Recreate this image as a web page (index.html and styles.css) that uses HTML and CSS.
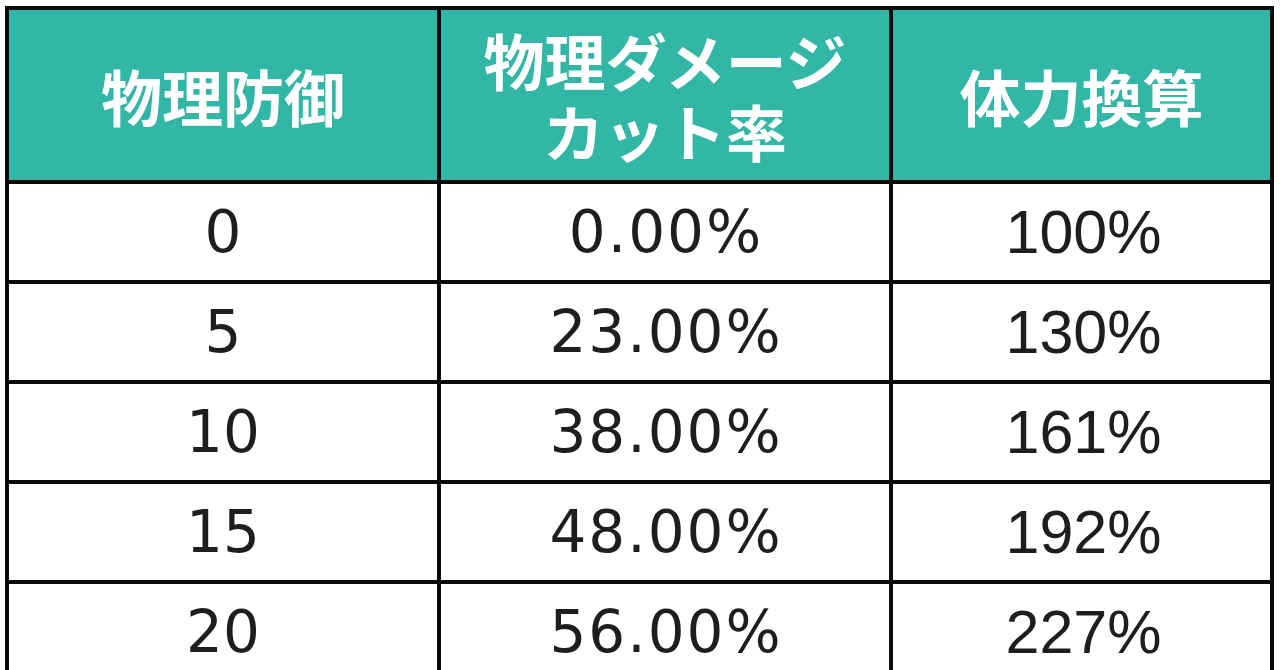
FILE: index.html
```html
<!DOCTYPE html>
<html lang="ja">
<head>
<meta charset="utf-8">
<title>物理防御</title>
<link rel="stylesheet" href="styles.css">
</head>
<body>
<div class="table">
  <div class="th">物理防御</div>
  <div class="th">物理ダメージ<br>カット率</div>
  <div class="th">体力換算</div>

  <div class="td def">0</div>
  <div class="td cut">0.00%</div>
  <div class="td hp">100%</div>

  <div class="td def">5</div>
  <div class="td cut">23.00%</div>
  <div class="td hp">130%</div>

  <div class="td def">10</div>
  <div class="td cut">38.00%</div>
  <div class="td hp">161%</div>

  <div class="td def">15</div>
  <div class="td cut">48.00%</div>
  <div class="td hp">192%</div>

  <div class="td def">20</div>
  <div class="td cut">56.00%</div>
  <div class="td hp">227%</div>
</div>
</body>
</html>
```

FILE: styles.css
```css
html, body {
  margin: 0;
  padding: 0;
  background: #ffffff;
  overflow: hidden;
}

.table {
  display: grid;
  grid-template-columns: 428px 448px 377px;
  grid-template-rows: 170px repeat(5, 96px);
  gap: 4px;
  padding: 4px;
  background: #0a0a0a;
  width: max-content;
  margin: 6px 0 0 5px;
}

.th {
  background: #32b6a5;
  color: #ffffff;
  font-family: "Noto Sans CJK JP", sans-serif;
  font-weight: 700;
  font-size: 61px;
  line-height: 71px;
  display: flex;
  align-items: center;
  justify-content: center;
  text-align: center;
}

.td {
  background: #ffffff;
  color: #1e1e1e;
  font-family: "DejaVu Sans", sans-serif;
  font-size: 58px;
  display: flex;
  align-items: center;
  justify-content: center;
}

.def {
  letter-spacing: 0;
}

.cut {
  letter-spacing: 2px;
  padding-left: 2px;
}

.hp {
  font-family: "Liberation Sans", Arial, sans-serif;
  font-size: 61px;
  padding-left: 4px;
}
```
